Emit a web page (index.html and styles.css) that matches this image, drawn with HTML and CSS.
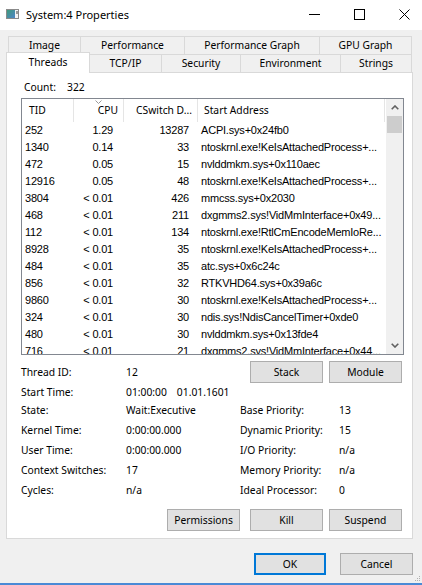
FILE: index.html
```html
<!DOCTYPE html>
<html lang="en">
<head>
  <meta charset="UTF-8" />
  <meta name="viewport" content="width=device-width, initial-scale=1.0"/>
  <title>System:4 Properties</title>
  <link rel="stylesheet" href="styles.css">
</head>
<body>
<div class="window">
  <div class="titlebar">
    <svg class="app-icon" width="13" height="10" viewBox="0 0 13 10">
      <defs>
        <linearGradient id="ig" x1="0" y1="0" x2="1" y2="1">
          <stop offset="0" stop-color="#3f9a7c"/>
          <stop offset="1" stop-color="#4f86c8"/>
        </linearGradient>
      </defs>
      <rect x="0.5" y="0.5" width="12" height="9" fill="#f4f4f4" stroke="#8a8a8a"/>
      <rect x="1" y="1" width="8" height="8" fill="url(#ig)"/>
      <rect x="10" y="2" width="2" height="3" fill="#9a9a9a"/>
    </svg>
    <span class="title">System:4 Properties</span>
    <div class="caption">
      <span class="cap-btn">
        <svg width="11" height="11" viewBox="0 0 11 11"><line x1="0" y1="5.5" x2="11" y2="5.5" stroke="#000"/></svg>
      </span>
      <span class="cap-btn">
        <svg width="11" height="11" viewBox="0 0 11 11"><rect x="0.5" y="0.5" width="10" height="10" fill="none" stroke="#000"/></svg>
      </span>
      <span class="cap-btn">
        <svg width="11" height="11" viewBox="0 0 11 11"><path d="M0.5 0.5 L10.5 10.5 M10.5 0.5 L0.5 10.5" stroke="#000" fill="none"/></svg>
      </span>
    </div>
  </div>

  <div class="tabs">
    <div class="tab-row back">
      <div class="tab w-image">Image</div>
      <div class="tab w-perf">Performance</div>
      <div class="tab w-perfgraph">Performance Graph</div>
      <div class="tab w-gpu">GPU Graph</div>
    </div>
    <div class="tab-row front">
      <div class="tab selected w-threads">Threads</div>
      <div class="tab w-tcp">TCP/IP</div>
      <div class="tab w-security">Security</div>
      <div class="tab w-env">Environment</div>
      <div class="tab w-strings">Strings</div>
    </div>
  </div>

  <div class="panel">
    <div class="count"><span class="count-label">Count:</span>322</div>

    <div class="list">
      <div class="list-body">
        <div class="list-head">
          <div class="h c-tid">TID</div>
          <div class="h c-cpu sorted">CPU
            <svg class="sort-arrow" width="7" height="4" viewBox="0 0 7 4"><polyline points="0.5,0.5 3.5,3.5 6.5,0.5" fill="none" stroke="#9a9a9a"/></svg>
          </div>
          <div class="h c-sw">CSwitch D...</div>
          <div class="h c-addr">Start Address</div>
        </div>
        <div class="row"><span class="c-tid">252</span><span class="c-cpu">1.29</span><span class="c-sw">13287</span><span class="c-addr">ACPI.sys+0x24fb0</span></div>
        <div class="row"><span class="c-tid">1340</span><span class="c-cpu">0.14</span><span class="c-sw">33</span><span class="c-addr">ntoskrnl.exe!KeIsAttachedProcess+...</span></div>
        <div class="row"><span class="c-tid">472</span><span class="c-cpu">0.05</span><span class="c-sw">15</span><span class="c-addr">nvlddmkm.sys+0x110aec</span></div>
        <div class="row"><span class="c-tid">12916</span><span class="c-cpu">0.05</span><span class="c-sw">48</span><span class="c-addr">ntoskrnl.exe!KeIsAttachedProcess+...</span></div>
        <div class="row"><span class="c-tid">3804</span><span class="c-cpu">&lt; 0.01</span><span class="c-sw">426</span><span class="c-addr">mmcss.sys+0x2030</span></div>
        <div class="row"><span class="c-tid">468</span><span class="c-cpu">&lt; 0.01</span><span class="c-sw">211</span><span class="c-addr">dxgmms2.sys!VidMmInterface+0x49...</span></div>
        <div class="row"><span class="c-tid">112</span><span class="c-cpu">&lt; 0.01</span><span class="c-sw">134</span><span class="c-addr">ntoskrnl.exe!RtlCmEncodeMemIoRe...</span></div>
        <div class="row"><span class="c-tid">8928</span><span class="c-cpu">&lt; 0.01</span><span class="c-sw">35</span><span class="c-addr">ntoskrnl.exe!KeIsAttachedProcess+...</span></div>
        <div class="row"><span class="c-tid">484</span><span class="c-cpu">&lt; 0.01</span><span class="c-sw">35</span><span class="c-addr">atc.sys+0x6c24c</span></div>
        <div class="row"><span class="c-tid">856</span><span class="c-cpu">&lt; 0.01</span><span class="c-sw">32</span><span class="c-addr">RTKVHD64.sys+0x39a6c</span></div>
        <div class="row"><span class="c-tid">9860</span><span class="c-cpu">&lt; 0.01</span><span class="c-sw">30</span><span class="c-addr">ntoskrnl.exe!KeIsAttachedProcess+...</span></div>
        <div class="row"><span class="c-tid">324</span><span class="c-cpu">&lt; 0.01</span><span class="c-sw">30</span><span class="c-addr">ndis.sys!NdisCancelTimer+0xde0</span></div>
        <div class="row"><span class="c-tid">480</span><span class="c-cpu">&lt; 0.01</span><span class="c-sw">30</span><span class="c-addr">nvlddmkm.sys+0x13fde4</span></div>
        <div class="row"><span class="c-tid">716</span><span class="c-cpu">&lt; 0.01</span><span class="c-sw">21</span><span class="c-addr">dxgmms2.sys!VidMmInterface+0x44...</span></div>
      </div>
      <div class="scrollbar">
        <div class="sb-btn">
          <svg width="8" height="5" viewBox="0 0 8 5"><polyline points="0.7,4.3 4,1 7.3,4.3" fill="none" stroke="#606060" stroke-width="1.6"/></svg>
        </div>
        <div class="sb-thumb"></div>
        <div class="sb-track"></div>
        <div class="sb-btn">
          <svg width="8" height="5" viewBox="0 0 8 5"><polyline points="0.7,0.7 4,4 7.3,0.7" fill="none" stroke="#606060" stroke-width="1.6"/></svg>
        </div>
      </div>
    </div>

    <div class="info">
      <div class="info-top">
        <span class="lbl1">Thread ID:</span>
        <span class="val-top">12</span>
        <button class="btn">Stack</button>
        <button class="btn">Module</button>
      </div>
      <div class="info-row short">
        <span>Start Time:</span>
        <span>01:00:00<span class="date">01.01.1601</span></span>
      </div>
      <div class="info-row">
        <span>State:</span><span>Wait:Executive</span>
        <span>Base Priority:</span><span>13</span>
      </div>
      <div class="info-row">
        <span>Kernel Time:</span><span>0:00:00.000</span>
        <span>Dynamic Priority:</span><span>15</span>
      </div>
      <div class="info-row">
        <span>User Time:</span><span>0:00:00.000</span>
        <span>I/O Priority:</span><span>n/a</span>
      </div>
      <div class="info-row">
        <span>Context Switches:</span><span>17</span>
        <span>Memory Priority:</span><span>n/a</span>
      </div>
      <div class="info-row">
        <span>Cycles:</span><span>n/a</span>
        <span>Ideal Processor:</span><span>0</span>
      </div>
    </div>

    <div class="actions">
      <button class="btn">Permissions</button>
      <button class="btn gap-wide">Kill</button>
      <button class="btn">Suspend</button>
    </div>
  </div>

  <div class="dialog-buttons">
    <button class="btn ok">OK</button>
    <button class="btn">Cancel</button>
  </div>

  <svg class="grip" width="6" height="6" viewBox="0 0 6 6">
    <rect x="4" y="0" width="1" height="1" fill="#b0b0b0"/>
    <rect x="2" y="2" width="1" height="1" fill="#b0b0b0"/>
    <rect x="4" y="2" width="1" height="1" fill="#b0b0b0"/>
    <rect x="0" y="4" width="1" height="1" fill="#b0b0b0"/>
    <rect x="2" y="4" width="1" height="1" fill="#b0b0b0"/>
    <rect x="4" y="4" width="1" height="1" fill="#b0b0b0"/>
  </svg>
  <div class="desktop-edge"></div>
</div>
</body>
</html>
```

FILE: styles.css
```css
* {
  box-sizing: border-box;
}

body {
  margin: 0;
  background-color: #f0f0f0;
  font-family: "Noto Sans", sans-serif;
  font-size: 10.3px;
  color: #000;
}

.window {
  position: relative;
  width: 422px;
  height: 585px;
  display: flex;
  flex-direction: column;
  overflow: hidden;
  background-color: #f0f0f0;
}

/* title bar */

.titlebar {
  height: 30px;
  background-color: #fff;
  display: flex;
  align-items: center;
  padding-bottom: 2px;
}

.app-icon {
  margin-left: 6px;
}

.title {
  margin-left: 7px;
  font-size: 11px;
}

.caption {
  display: flex;
  margin-left: auto;
  margin-right: -5px;
}

.cap-btn {
  width: 45px;
  display: flex;
  justify-content: center;
}

/* tabs */

.tabs {
  padding-top: 6px;
}

.tab-row {
  display: flex;
  height: 18px;
}

.tab-row.back {
  margin-left: 8px;
}

.tab-row.front {
  margin-left: 6px;
}

.tab {
  height: 18px;
  border-top: 1px solid #d9d9d9;
  border-left: 1px solid #d9d9d9;
  background-color: #f0f0f0;
  text-align: center;
  line-height: 17px;
  white-space: nowrap;
}

.tab:last-child {
  border-right: 1px solid #d9d9d9;
}

.tab.selected {
  position: relative;
  z-index: 1;
  height: 21px;
  margin-top: -2px;
  border-right: 1px solid #d9d9d9;
  background-color: #fff;
  line-height: 18px;
}

.tab.selected + .tab {
  border-left: none;
}

.w-image { width: 72px; }
.w-perf { width: 104px; }
.w-perfgraph { width: 135px; }
.w-gpu { width: 93px; }
.w-threads { width: 84px; }
.w-tcp { width: 71px; }
.w-security { width: 79px; }
.w-env { width: 100px; }
.w-strings { width: 72px; }

/* panel */

.panel {
  margin-left: 6px;
  width: 407px;
  height: 467px;
  background-color: #fff;
  border: 1px solid #d9d9d9;
  padding: 6px 8px 7px 14px;
}

.count {
  padding-left: 3px;
  line-height: 16px;
  height: 16px;
}

.count-label {
  display: inline-block;
  width: 43px;
}

/* list view */

.list {
  margin-top: 3px;
  width: 383px;
  height: 257px;
  border: 1px solid #828790;
  display: flex;
}

.list-body {
  width: 364px;
  overflow: hidden;
}

.list-head {
  display: flex;
  height: 23px;
}

.list-head .h {
  position: relative;
  height: 23px;
  line-height: 22px;
  border-right: 1px solid #e5e5e5;
  white-space: nowrap;
}

.row {
  display: flex;
  height: 17px;
  line-height: 17px;
  font-family: "Liberation Sans", Arial, sans-serif;
  font-size: 11px;
  letter-spacing: -0.2px;
  white-space: nowrap;
}

.row span {
  overflow: hidden;
}

.c-tid { width: 52px; }
.c-cpu { width: 50px; text-align: right; }
.c-sw { width: 74px; text-align: right; }
.c-addr { width: 187px; }

.list-head .c-tid { padding-left: 7px; }
.list-head .c-cpu { padding-right: 5px; }
.list-head .c-sw { padding-right: 5px; }
.list-head .c-addr { padding-left: 6px; }

.row .c-tid { padding-left: 3px; }
.row .c-cpu { padding-right: 11px; }
.row .c-sw { padding-right: 9px; }
.row .c-addr { padding-left: 3px; }

.sort-arrow {
  position: absolute;
  top: 1px;
  left: 21px;
}

.scrollbar {
  width: 17px;
  background-color: #f0f0f0;
  display: flex;
  flex-direction: column;
}

.sb-btn {
  height: 17px;
  display: flex;
  align-items: center;
  justify-content: center;
}

.sb-thumb {
  height: 17px;
  margin: 0 1px;
  background-color: #cdcdcd;
}

.sb-track {
  flex: 1;
}

/* thread details */

.info {
  margin-top: 6px;
}

.info-top {
  display: flex;
  align-items: center;
  height: 22px;
}

.lbl1 {
  width: 105px;
}

.val-top {
  width: 124px;
}

.info-top .btn + .btn {
  margin-left: 6px;
}

.info-row {
  display: grid;
  grid-template-columns: 105px 114px 99px 1fr;
  align-items: center;
  height: 20px;
}

.info-row.short {
  height: 17px;
}

.date {
  margin-left: 10px;
}

.btn {
  width: 73px;
  height: 22px;
  padding: 0;
  border: 1px solid #adadad;
  background-color: #e1e1e1;
  font-family: "Noto Sans", sans-serif;
  font-size: 10.3px;
  color: #000;
}

.actions {
  display: flex;
  justify-content: flex-end;
  gap: 6px;
  margin-top: 9px;
  margin-right: 2px;
}

.actions .gap-wide {
  margin-left: 4px;
}

/* dialog buttons */

.dialog-buttons {
  display: flex;
  justify-content: flex-end;
  gap: 14px;
  margin-top: 14px;
  padding-right: 9px;
}

.btn.ok {
  width: 72px;
  border: 2px solid #0078d7;
}

.grip {
  position: absolute;
  right: 1px;
  bottom: 3px;
}

.desktop-edge {
  margin-top: auto;
  height: 2px;
  background-color: #4a8ad6;
}
```
